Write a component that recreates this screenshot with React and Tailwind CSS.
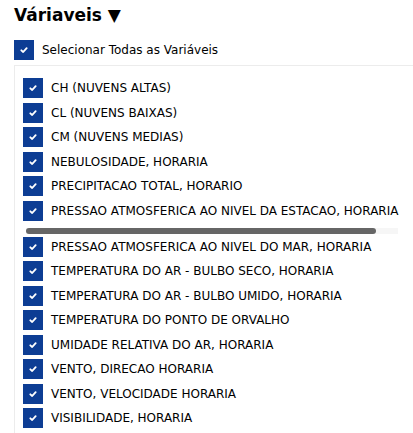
import React from 'react';

const variaveis = [
  "CH (NUVENS ALTAS)",
  "CL (NUVENS BAIXAS)",
  "CM (NUVENS MEDIAS)",
  "NEBULOSIDADE, HORARIA",
  "PRECIPITACAO TOTAL, HORARIO",
  "PRESSAO ATMOSFERICA AO NIVEL DA ESTACAO, HORARIA",
];

const variaveis2 = [
  "PRESSAO ATMOSFERICA AO NIVEL DO MAR, HORARIA",
  "TEMPERATURA DO AR - BULBO SECO, HORARIA",
  "TEMPERATURA DO AR - BULBO UMIDO, HORARIA",
  "TEMPERATURA DO PONTO DE ORVALHO",
  "UMIDADE RELATIVA DO AR, HORARIA",
  "VENTO, DIRECAO HORARIA",
  "VENTO, VELOCIDADE HORARIA",
  "VISIBILIDADE, HORARIA",
];

// caixa marcada
const Check = () => (
  <span className="w-5 h-5 shrink-0 bg-[#0d3d94] flex items-center justify-center">
    <svg viewBox="0 0 12 12" className="w-[8px] h-[8px]" fill="none" stroke="white" strokeWidth="2.8" strokeLinecap="round" strokeLinejoin="round">
      <path d="M2 6.5 L4.8 9 L10 3.2" />
    </svg>
  </span>
);

const Linha = ({ texto }) => (
  <label className="h-[24.5px] flex items-center gap-2 whitespace-nowrap">
    <Check />
    <span>{texto}</span>
  </label>
);

export default function App() {
  return (
    <div className="h-[433px] bg-white text-black overflow-hidden pl-[14px] font-['DejaVu_Sans',sans-serif]">
      <h2 className="text-[17px] font-bold leading-[24px] pt-[3px]">Váriaveis ▼</h2>

      <label className="mt-[13px] flex items-center gap-2 text-[12px]">
        <Check />
        <span>Selecionar Todas as Variáveis</span>
      </label>

      <div className="mt-[5px] border-l border-t border-[#ececec] pl-2 pt-[10px] text-[12px] min-h-[400px]">
        {variaveis.map((v) => (
          <Linha key={v} texto={v} />
        ))}

        {/* barra de rolagem */}
        <div className="h-[11.5px] pt-[5px] pl-[3px]">
          <div className="w-[372px] h-[6px] bg-[#f6f6f6]">
            <div className="w-[350px] h-[6px] rounded-full bg-[#666]"></div>
          </div>
        </div>

        {variaveis2.map((v) => (
          <Linha key={v} texto={v} />
        ))}
      </div>
    </div>
  );
}
